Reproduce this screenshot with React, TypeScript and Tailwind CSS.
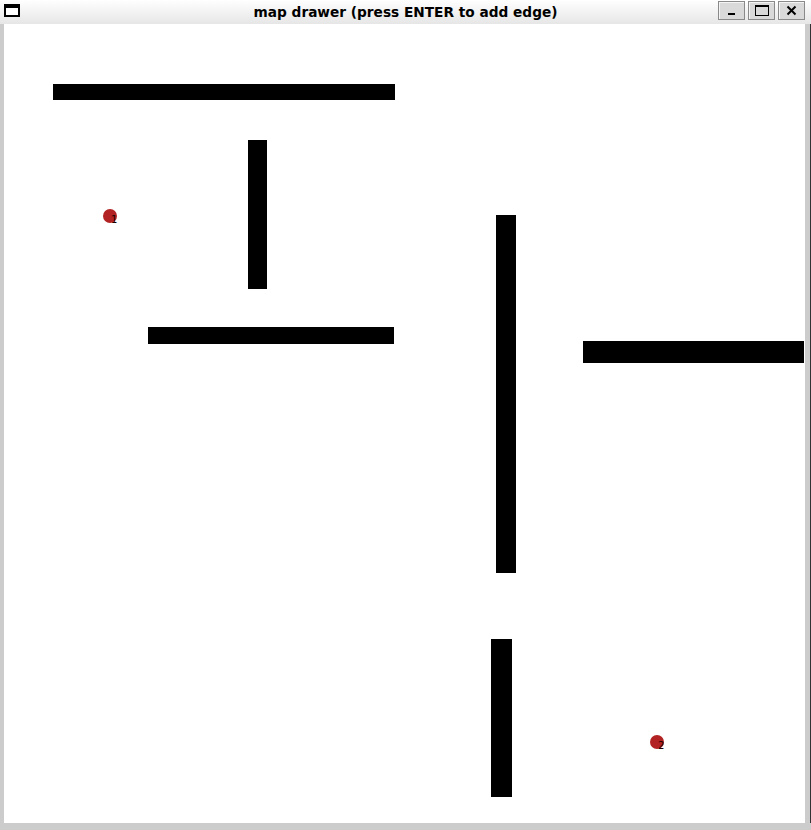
const walls = [
  { left: 49, top: 60, w: 342, h: 16 },
  { left: 244, top: 116, w: 19, h: 149 },
  { left: 144, top: 303, w: 246, h: 17 },
  { left: 492, top: 191, w: 20, h: 358 },
  { left: 579, top: 317, w: 221, h: 22 },
  { left: 487, top: 615, w: 21, h: 158 },
];

const nodes = [
  { x: 106, y: 192, label: "1" },
  { x: 653, y: 718, label: "2" },
];

function TitleButton({ children }: { children: React.ReactNode }) {
  return (
    <div className="flex h-[19px] w-[27px] items-center justify-center border border-[#8a8a8a] bg-[#d9d9d9] shadow-[inset_1px_1px_0_#f4f4f4]">
      {children}
    </div>
  );
}

export default function App() {
  return (
    <div className="flex h-[830px] w-[811px] flex-col bg-[#cccccc] font-['DejaVu_Sans',sans-serif]">
      {/* title bar */}
      <div className="relative flex h-6 items-start bg-gradient-to-b from-white to-[#e6e6e6]">
        <div className="ml-1 mt-1 h-[13px] w-4 border-2 border-t-4 border-black bg-white" />
        <div className="absolute left-0 right-0 top-[2px] text-center text-[13.7px] font-bold text-black">
          map drawer (press ENTER to add edge)
        </div>
        <div className="ml-auto mr-[6px] mt-[1px] flex gap-[3px]">
          <TitleButton>
            <div className="mt-[6px] h-[2px] w-[7px] bg-black" />
          </TitleButton>
          <TitleButton>
            <div className="h-[11px] w-[14px] border border-t-2 border-black" />
          </TitleButton>
          <TitleButton>
            <svg width="11" height="11" viewBox="0 0 11 11">
              <path d="M1.5 1.5 L9.5 9.5 M9.5 1.5 L1.5 9.5" stroke="black" strokeWidth="2" />
            </svg>
          </TitleButton>
        </div>
      </div>

      {/* canvas */}
      <div className="flex flex-1 pb-[7px] pl-1">
        <div className="relative flex-1 overflow-hidden bg-white">
          {walls.map((w, i) => (
            <div
              key={i}
              className="absolute bg-black"
              style={{ left: w.left, top: w.top, width: w.w, height: w.h }}
            />
          ))}
          {nodes.map((n) => (
            <div key={n.label}>
              <div
                className="absolute h-[14px] w-[14px] rounded-full bg-[#b22222]"
                style={{ left: n.x - 7, top: n.y - 7 }}
              />
              <div
                className="absolute text-[10px] leading-none text-[#1a0000]"
                style={{ left: n.x + 1, top: n.y - 1 }}
              >
                {n.label}
              </div>
            </div>
          ))}
        </div>
        <div className="w-[5px]" />
        <div className="w-px bg-[#333333]" />
      </div>
    </div>
  );
}
